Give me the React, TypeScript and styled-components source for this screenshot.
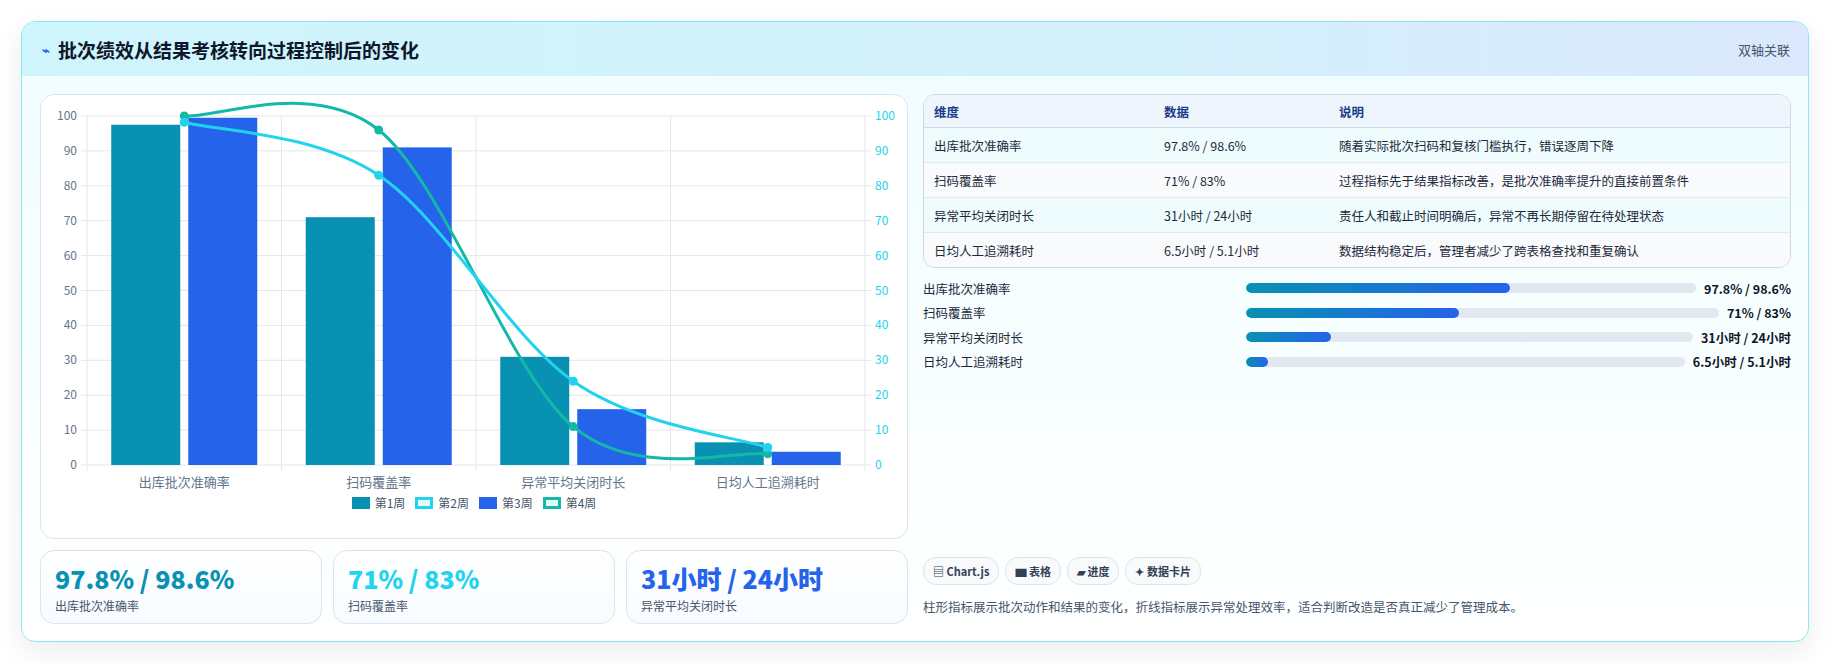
import React from 'react';
import styled, { createGlobalStyle } from 'styled-components';

const GlobalStyle = createGlobalStyle`
  body {
    margin: 0;
    background: #ffffff;
    font-family: "Noto Sans CJK SC", "Noto Sans", sans-serif;
    color: #1e293b;
  }
`;

const categories = ['出库批次准确率', '扫码覆盖率', '异常平均关闭时长', '日均人工追溯耗时'];
const week1 = [97.5, 71, 31, 6.5];
const week3 = [99.5, 91, 16, 3.8];
const week2 = [98.2, 83, 24, 5];
const week4 = [100, 96, 11, 3.2];

const rows = [
  { name: '出库批次准确率', data: '97.8% / 98.6%', note: '随着实际批次扫码和复核门槛执行，错误逐周下降', fill: 58.6 },
  { name: '扫码覆盖率', data: '71% / 83%', note: '过程指标先于结果指标改善，是批次准确率提升的直接前置条件', fill: 45 },
  { name: '异常平均关闭时长', data: '31小时 / 24小时', note: '责任人和截止时间明确后，异常不再长期停留在待处理状态', fill: 19 },
  { name: '日均人工追溯耗时', data: '6.5小时 / 5.1小时', note: '数据结构稳定后，管理者减少了跨表格查找和重复确认', fill: 5 },
];

const L = 46;
const R = 824;
const T = 21;
const B = 370;
const cw = (R - L) / 4;
const cx = (i: number) => L + cw * i + cw / 2;
const cy = (v: number) => B - ((B - T) * v) / 100;

const curve = (vals: number[]) => {
  const pts = vals.map((v, i) => [cx(i), cy(v)]);
  let d = `M${pts[0][0]},${pts[0][1]}`;
  for (let i = 0; i < pts.length - 1; i++) {
    const p0 = pts[i - 1] || pts[i];
    const p1 = pts[i];
    const p2 = pts[i + 1];
    const p3 = pts[i + 2] || p2;
    const c1 = [p1[0] + (p2[0] - p0[0]) / 6, p1[1] + (p2[1] - p0[1]) / 6];
    const c2 = [p2[0] - (p3[0] - p1[0]) / 6, p2[1] - (p3[1] - p1[1]) / 6];
    d += ` C${c1[0]},${c1[1]} ${c2[0]},${c2[1]} ${p2[0]},${p2[1]}`;
  }
  return d;
};

const ticks = [0, 10, 20, 30, 40, 50, 60, 70, 80, 90, 100];

const Chart = () => (
  <svg width="866" height="395" viewBox="0 0 866 395">
    {ticks.map((t) => (
      <g key={t}>
        <line x1={L - 6} x2={R + 6} y1={cy(t)} y2={cy(t)} stroke="#e5e7eb" />
        <text x={L - 10} y={cy(t) + 4} fontSize="12" fill="#64748b" textAnchor="end">{t}</text>
        <text x={R + 10} y={cy(t) + 4} fontSize="12" fill="#22d3ee">{t}</text>
      </g>
    ))}
    {[0, 1, 2, 3, 4].map((i) => (
      <line key={i} x1={L + cw * i} x2={L + cw * i} y1={T} y2={B + 6} stroke="#e5e7eb" />
    ))}
    {week1.map((v, i) => (
      <rect key={'a' + i} x={cx(i) - 73} y={cy(v)} width="69" height={B - cy(v)} fill="#0891b2" />
    ))}
    {week3.map((v, i) => (
      <rect key={'b' + i} x={cx(i) + 4} y={cy(v)} width="69" height={B - cy(v)} fill="#2563eb" />
    ))}
    <path d={curve(week4)} fill="none" stroke="#14b8a6" strokeWidth="3" />
    <path d={curve(week2)} fill="none" stroke="#22d3ee" strokeWidth="3" />
    {week4.map((v, i) => <circle key={'c' + i} cx={cx(i)} cy={cy(v)} r="4.5" fill="#14b8a6" />)}
    {week2.map((v, i) => <circle key={'d' + i} cx={cx(i)} cy={cy(v)} r="4.5" fill="#22d3ee" />)}
    {categories.map((c, i) => (
      <text key={c} x={cx(i)} y={B + 22} fontSize="13" fill="#64748b" textAnchor="middle">{c}</text>
    ))}
  </svg>
);

const legend = [
  { label: '第1周', color: '#0891b2', hollow: false },
  { label: '第2周', color: '#22d3ee', hollow: true },
  { label: '第3周', color: '#2563eb', hollow: false },
  { label: '第4周', color: '#14b8a6', hollow: true },
];

export default function App() {
  return (
    <>
      <GlobalStyle />
      <Page>
        <Card>
          <Header>
            <Title>
              <Spark>⌁</Spark>批次绩效从结果考核转向过程控制后的变化
            </Title>
            <HeaderNote>双轴关联</HeaderNote>
          </Header>
          <Body>
            <LeftCol>
              <ChartCard>
                <Chart />
                <Legend>
                  {legend.map((l) => (
                    <LegendItem key={l.label}>
                      <Swatch $color={l.color} $hollow={l.hollow} />
                      {l.label}
                    </LegendItem>
                  ))}
                </Legend>
              </ChartCard>
              <Stats>
                <Stat>
                  <StatValue $color="#0891b2">97.8% / 98.6%</StatValue>
                  <StatLabel>出库批次准确率</StatLabel>
                </Stat>
                <Stat>
                  <StatValue $color="#22d3ee">71% / 83%</StatValue>
                  <StatLabel>扫码覆盖率</StatLabel>
                </Stat>
                <Stat>
                  <StatValue $color="#2563eb">31小时 / 24小时</StatValue>
                  <StatLabel>异常平均关闭时长</StatLabel>
                </Stat>
              </Stats>
            </LeftCol>
            <RightCol>
              <Table>
                <thead>
                  <tr>
                    <Th style={{ width: 210 }}>维度</Th>
                    <Th style={{ width: 155 }}>数据</Th>
                    <Th>说明</Th>
                  </tr>
                </thead>
                <tbody>
                  {rows.map((r, i) => (
                    <Tr key={r.name} $odd={i % 2 === 1}>
                      <Td>{r.name}</Td>
                      <Td>{r.data}</Td>
                      <Td>{r.note}</Td>
                    </Tr>
                  ))}
                </tbody>
              </Table>
              <Progress>
                {rows.map((r) => (
                  <ProgressRow key={r.name}>
                    <ProgressLabel>{r.name}</ProgressLabel>
                    <Track>
                      <Fill style={{ width: `${r.fill}%` }} />
                    </Track>
                    <ProgressValue>{r.data}</ProgressValue>
                  </ProgressRow>
                ))}
              </Progress>
              <Spacer />
              <Tags>
                <Tag>▤ Chart.js</Tag>
                <Tag>▆ 表格</Tag>
                <Tag>▰ 进度</Tag>
                <Tag>✦ 数据卡片</Tag>
              </Tags>
              <Description>柱形指标展示批次动作和结果的变化，折线指标展示异常处理效率，适合判断改造是否真正减少了管理成本。</Description>
            </RightCol>
          </Body>
        </Card>
      </Page>
    </>
  );
}

const Page = styled.div`
  padding: 21px 22px 23px 21px;
`;

const Card = styled.div`
  border: 1px solid #8ee6f3;
  border-radius: 14px;
  overflow: hidden;
  background: linear-gradient(180deg, #effdff 0%, #ffffff 100%);
  box-shadow: 0 10px 28px rgba(15, 23, 42, 0.08);
`;

const Header = styled.div`
  height: 54px;
  display: flex;
  align-items: center;
  justify-content: space-between;
  padding: 0 18px 0 20px;
  background: linear-gradient(90deg, #cff5fc 0%, #d3f1fb 60%, #dbe8fd 100%);
`;

const Title = styled.div`
  font-size: 19px;
  font-weight: 700;
  color: #0f172a;
  display: flex;
  align-items: center;
  gap: 8px;
`;

const Spark = styled.span`
  font-size: 13px;
  color: #2563eb;
`;

const HeaderNote = styled.div`
  font-size: 13px;
  color: #475569;
`;

const Body = styled.div`
  display: flex;
  gap: 15px;
  padding: 18px 17px 17px 18px;
`;

const LeftCol = styled.div`
  width: 868px;
  display: flex;
  flex-direction: column;
  gap: 11px;
`;

const ChartCard = styled.div`
  height: 445px;
  background: #ffffff;
  border: 1px solid #dbe4ef;
  border-radius: 14px;
  box-sizing: border-box;
  display: flex;
  flex-direction: column;
`;

const Legend = styled.div`
  display: flex;
  justify-content: center;
  gap: 10px;
  font-size: 12px;
  color: #475569;
  margin-top: 4px;
`;

const LegendItem = styled.div`
  display: flex;
  align-items: center;
  gap: 5px;
`;

const Swatch = styled.span<{ $color: string; $hollow: boolean }>`
  width: 18px;
  height: 12px;
  box-sizing: border-box;
  background: ${(p) => (p.$hollow ? '#e6fbfb' : p.$color)};
  border: 3px solid ${(p) => p.$color};
`;

const Stats = styled.div`
  display: grid;
  grid-template-columns: repeat(3, 282px);
  gap: 11px;
`;

const Stat = styled.div`
  height: 74px;
  box-sizing: border-box;
  padding: 12px 14px;
  border: 1px solid #dbe4ef;
  border-radius: 14px;
  background: linear-gradient(180deg, #ffffff 0%, #f7fbff 100%);
`;

const StatValue = styled.div<{ $color: string }>`
  font-size: 25px;
  font-weight: 800;
  color: ${(p) => p.$color};
  line-height: 30px;
`;

const StatLabel = styled.div`
  font-size: 12px;
  color: #475569;
  margin-top: 4px;
`;

const RightCol = styled.div`
  flex: 1;
  display: flex;
  flex-direction: column;
`;

const Table = styled.table`
  width: 100%;
  border-collapse: separate;
  border-spacing: 0;
  border: 1px solid #cdd9e6;
  border-radius: 12px;
  overflow: hidden;
  font-size: 12.5px;
`;

const Th = styled.th`
  text-align: left;
  font-weight: 700;
  color: #1e3a8a;
  background: #eef5fd;
  height: 32px;
  padding: 0 10px;
  border-bottom: 1px solid #cdd9e6;
`;

const Tr = styled.tr<{ $odd: boolean }>`
  background: ${(p) => (p.$odd ? '#f8fafc' : '#eefcfd')};
  td {
    border-top: 1px solid #e2e8f0;
  }
  &:nth-child(1) td {
    border-top: none;
  }
`;

const Td = styled.td`
  height: 34px;
  padding: 0 10px;
  color: #1e293b;
`;

const Progress = styled.div`
  display: flex;
  flex-direction: column;
  margin-top: 8px;
`;

const ProgressRow = styled.div`
  height: 24.5px;
  display: flex;
  align-items: center;
  font-size: 12.5px;
`;

const ProgressLabel = styled.div`
  width: 323px;
  flex-shrink: 0;
`;

const Track = styled.div`
  flex: 1;
  height: 10px;
  border-radius: 5px;
  background: #e2e8f0;
  overflow: hidden;
`;

const Fill = styled.div`
  height: 100%;
  border-radius: 5px;
  background: linear-gradient(90deg, #0891b2, #2563eb);
`;

const ProgressValue = styled.div`
  font-weight: 700;
  margin-left: 8px;
  color: #0f172a;
`;

const Spacer = styled.div`
  flex: 1;
`;

const Tags = styled.div`
  display: flex;
  gap: 6px;
`;

const Tag = styled.div`
  font-size: 11px;
  font-weight: 700;
  color: #334155;
  padding: 5px 9px;
  border: 1px solid #dbe4ef;
  border-radius: 13px;
  background: #f8fafc;
`;

const Description = styled.div`
  font-size: 12.5px;
  color: #475569;
  margin: 12px 0 8px;
`;
